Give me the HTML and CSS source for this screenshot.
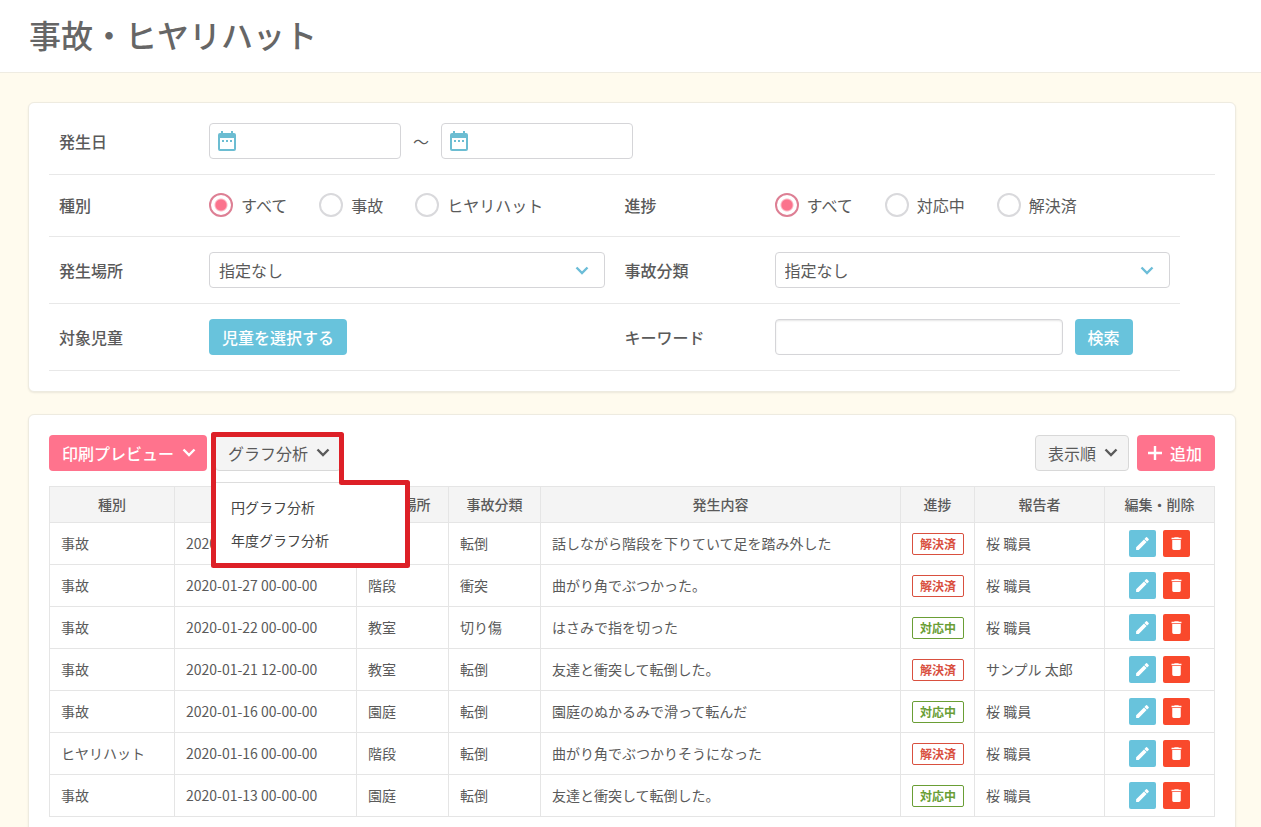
FILE: index.html
```html
<!DOCTYPE html>
<html lang="ja">
<head>
<meta charset="utf-8">
<title>事故・ヒヤリハット</title>
<link rel="stylesheet" href="styles.css">
</head>
<body>
<svg class="defs" aria-hidden="true">
  <symbol id="chevron" viewBox="0 0 14 10"><path d="M1.500 1.500l5.500 5.500 5.500-5.500" fill="none" stroke="currentColor" stroke-width="2.400"/></symbol>
  <symbol id="plus" viewBox="0 0 16 16"><path d="M8 1v14M1 8h14" fill="none" stroke="currentColor" stroke-width="2.400"/></symbol>
  <symbol id="calendar" viewBox="0 0 18 20"><path d="M3 0h2v2h8V0h2v2h1a2 2 0 0 1 2 2v14a2 2 0 0 1-2 2H2a2 2 0 0 1-2-2V4a2 2 0 0 1 2-2h1zM2 7v11h14V7zM4 9h2v2H4zm4 0h2v2H8zm4 0h2v2h-2z" fill="currentColor" fill-rule="evenodd"/></symbol>
  <symbol id="pencil" viewBox="0 0 24 24"><path d="M3 17.300V21h3.700L17.800 9.900l-3.700-3.700zM20.700 7a1 1 0 0 0 0-1.400l-2.300-2.300a1 1 0 0 0-1.400 0l-2.300 2.200 3.800 3.800z" fill="currentColor"/></symbol>
  <symbol id="trash" viewBox="0 0 24 24"><path d="M6 19a2 2 0 0 0 2 2h8a2 2 0 0 0 2-2V7H6zM19 4h-3.500l-1-1h-5l-1 1H5v2h14z" fill="currentColor"/></symbol>
</svg>

<header class="page-header"><h1>事故・ヒヤリハット</h1></header>

<main class="main">
  <form class="card filters">
    <div class="row row-wide">
      <div class="field">
        <label class="name" for="from">発生日</label>
        <div class="control dates">
          <span class="date"><input id="from" class="box" type="text"><svg class="cal"><use href="#calendar"/></svg></span>
          <span>～</span>
          <span class="date"><input class="box" type="text" aria-label="発生日 終了"><svg class="cal"><use href="#calendar"/></svg></span>
        </div>
      </div>
    </div>
    <div class="row row-radios">
      <div class="field" role="radiogroup" aria-labelledby="kind">
        <span class="name" id="kind">種別</span>
        <div class="control radios">
          <label><input type="radio" name="kind" checked>すべて</label>
          <label><input type="radio" name="kind">事故</label>
          <label><input type="radio" name="kind">ヒヤリハット</label>
        </div>
      </div>
      <div class="field" role="radiogroup" aria-labelledby="progress">
        <span class="name" id="progress">進捗</span>
        <div class="control radios">
          <label><input type="radio" name="progress" checked>すべて</label>
          <label><input type="radio" name="progress">対応中</label>
          <label><input type="radio" name="progress">解決済</label>
        </div>
      </div>
    </div>
    <div class="row">
      <div class="field">
        <label class="name" for="place">発生場所</label>
        <div class="control select"><select id="place" class="box"><option>指定なし</option></select><svg class="chevron"><use href="#chevron"/></svg></div>
      </div>
      <div class="field">
        <label class="name" for="category">事故分類</label>
        <div class="control select"><select id="category" class="box"><option>指定なし</option></select><svg class="chevron"><use href="#chevron"/></svg></div>
      </div>
    </div>
    <div class="row">
      <div class="field">
        <span class="name">対象児童</span>
        <div class="control"><button class="btn blue" type="button">児童を選択する</button></div>
      </div>
      <div class="field">
        <label class="name" for="keyword">キーワード</label>
        <div class="control search"><input id="keyword" class="box inset" type="text"><button class="btn blue" type="button">検索</button></div>
      </div>
    </div>
  </form>

  <section class="card">
    <div class="toolbar">
      <button class="btn pink" type="button">印刷プレビュー<svg class="chevron"><use href="#chevron"/></svg></button>
      <div class="dropdown">
        <button class="btn gray" type="button" aria-expanded="true">グラフ分析<svg class="chevron"><use href="#chevron"/></svg></button>
        <div class="menu">
          <a href="#">円グラフ分析</a>
          <a href="#">年度グラフ分析</a>
        </div>
        <svg class="outline" viewBox="0 0 199 136" aria-hidden="true"><path d="M2.500 2.500H130.500V50.500H196.500V133.500H2.500z" fill="none" stroke="#dd2027" stroke-width="5" stroke-linejoin="round"/></svg>
      </div>
      <button class="btn gray push" type="button">表示順<svg class="chevron"><use href="#chevron"/></svg></button>
      <button class="btn pink add" type="button"><svg class="plus"><use href="#plus"/></svg>追加</button>
    </div>
    <table class="list">
      <colgroup><col class="c-kind"><col class="c-date"><col class="c-place"><col class="c-place"><col><col class="c-state"><col class="c-staff"><col class="c-edit"></colgroup>
      <thead><tr><th>種別</th><th aria-label="発生日時"></th><th>発生場所</th><th>事故分類</th><th>発生内容</th><th>進捗</th><th>報告者</th><th>編集・削除</th></tr></thead>
      <tbody>
        <tr><td>事故</td><td>2020-01-28 00-00-00</td><td>階段</td><td>転倒</td><td>話しながら階段を下りていて足を踏み外した</td><td><span class="tag done">解決済</span></td><td>桜 職員</td><td><div class="ops"><button class="op edit" type="button" aria-label="編集"><svg><use href="#pencil"/></svg></button><button class="op del" type="button" aria-label="削除"><svg><use href="#trash"/></svg></button></div></td></tr>
        <tr><td>事故</td><td>2020-01-27 00-00-00</td><td>階段</td><td>衝突</td><td>曲がり角でぶつかった。</td><td><span class="tag done">解決済</span></td><td>桜 職員</td><td><div class="ops"><button class="op edit" type="button" aria-label="編集"><svg><use href="#pencil"/></svg></button><button class="op del" type="button" aria-label="削除"><svg><use href="#trash"/></svg></button></div></td></tr>
        <tr><td>事故</td><td>2020-01-22 00-00-00</td><td>教室</td><td>切り傷</td><td>はさみで指を切った</td><td><span class="tag open">対応中</span></td><td>桜 職員</td><td><div class="ops"><button class="op edit" type="button" aria-label="編集"><svg><use href="#pencil"/></svg></button><button class="op del" type="button" aria-label="削除"><svg><use href="#trash"/></svg></button></div></td></tr>
        <tr><td>事故</td><td>2020-01-21 12-00-00</td><td>教室</td><td>転倒</td><td>友達と衝突して転倒した。</td><td><span class="tag done">解決済</span></td><td>サンプル 太郎</td><td><div class="ops"><button class="op edit" type="button" aria-label="編集"><svg><use href="#pencil"/></svg></button><button class="op del" type="button" aria-label="削除"><svg><use href="#trash"/></svg></button></div></td></tr>
        <tr><td>事故</td><td>2020-01-16 00-00-00</td><td>園庭</td><td>転倒</td><td>園庭のぬかるみで滑って転んだ</td><td><span class="tag open">対応中</span></td><td>桜 職員</td><td><div class="ops"><button class="op edit" type="button" aria-label="編集"><svg><use href="#pencil"/></svg></button><button class="op del" type="button" aria-label="削除"><svg><use href="#trash"/></svg></button></div></td></tr>
        <tr><td>ヒヤリハット</td><td>2020-01-16 00-00-00</td><td>階段</td><td>転倒</td><td>曲がり角でぶつかりそうになった</td><td><span class="tag done">解決済</span></td><td>桜 職員</td><td><div class="ops"><button class="op edit" type="button" aria-label="編集"><svg><use href="#pencil"/></svg></button><button class="op del" type="button" aria-label="削除"><svg><use href="#trash"/></svg></button></div></td></tr>
        <tr><td>事故</td><td>2020-01-13 00-00-00</td><td>園庭</td><td>転倒</td><td>友達と衝突して転倒した。</td><td><span class="tag open">対応中</span></td><td>桜 職員</td><td><div class="ops"><button class="op edit" type="button" aria-label="編集"><svg><use href="#pencil"/></svg></button><button class="op del" type="button" aria-label="削除"><svg><use href="#trash"/></svg></button></div></td></tr>
      </tbody>
    </table>
  </section>
</main>
</body>
</html>
```
FILE: styles.css
```css
* { box-sizing: border-box; }
body {
  margin: 0;
  background: #fffbee;
  color: #5a5a5a;
  font: 16px/24px "Noto Sans CJK JP", "Noto Sans", sans-serif;
}
button, input, select { font: inherit; color: inherit; margin: 0; }
svg { display: block; flex: none; }
.defs { position: absolute; width: 0; height: 0; }

.page-header {
  background: #fff;
  border-bottom: 1px solid #efece2;
  padding: 10px 29px 14px;
}
.page-header h1 {
  margin: 0;
  font-size: 32px;
  line-height: 48px;
  font-weight: 500;
  color: #666;
}

.main { padding: 29px 25px 23px 28px; display: grid; gap: 22px; }
.card {
  background: #fff;
  border: 1px solid #eeebe0;
  border-radius: 6px;
  box-shadow: 0 1px 2px rgba(0, 0, 0, .08);
  padding: 20px;
  min-width: 0;
}

/* filters */
.row {
  display: flex;
  align-items: center;
  width: 97%;
  min-height: 62px;
  padding: 15px 0;
  border-bottom: 1px solid #e8e8e8;
}
.row-wide { width: 100%; padding-top: 0; min-height: 0; }
.row-radios { padding-bottom: 17px; }
.field { flex: 1; display: flex; align-items: center; padding: 0 10px; min-width: 0; }
.name { width: 150px; flex: none; font-weight: 500; }
.control { flex: 1; min-width: 0; }
.box {
  display: block;
  width: 100%;
  height: 36px;
  padding: 0 9px;
  border: 1px solid #d5d5d8;
  border-radius: 4px;
  background: #fff;
  appearance: none;
}
.inset { box-shadow: inset 0 1px 2px rgba(0, 0, 0, .1); }
.dates { display: flex; align-items: center; gap: 12px; }
.date { position: relative; width: 192px; }
.date .box { padding-left: 34px; }
.cal { position: absolute; left: 9px; top: 8px; width: 18px; height: 20px; color: #6cbdd2; pointer-events: none; }
.radios { display: flex; gap: 32px; }
.radios label { display: flex; align-items: center; gap: 8px; }
.radios input {
  appearance: none;
  width: 24px;
  height: 24px;
  border: 2px solid #d9d9dc;
  border-radius: 50%;
  background: #fff;
}
.radios input:checked {
  border-color: #dd7f94;
  background: radial-gradient(circle, #fb738d 5px, #fff 7px);
}
.select { position: relative; }
.chevron { width: 14px; height: 10px; }
.select .chevron { position: absolute; right: 16px; top: 14px; color: #6cbdd8; pointer-events: none; }
.search { display: flex; gap: 12px; }
.search .box { width: 288px; }

.btn {
  display: inline-flex;
  align-items: center;
  gap: 8px;
  height: 36px;
  padding: 0 12px;
  border: 1px solid transparent;
  border-radius: 4px;
  white-space: nowrap;
}
.control > .btn { flex: none; }
.blue { background: #68c3dc; color: #fff; font-weight: 500; }
.pink { background: #ff738d; color: #fff; font-weight: 500; }
.gray { background: #f4f4f4; border-color: #d8d8d8; }
.btn .chevron { margin-right: -2px; }

/* toolbar */
.toolbar { display: flex; gap: 8px; margin-bottom: 15px; }
.dropdown { position: relative; }
.push { margin-left: auto; }
.add { padding-left: 9px; gap: 7px; }
.plus { width: 16px; height: 16px; }
.menu {
  position: absolute;
  left: 0;
  top: 47px;
  width: 192px;
  padding: 8px 0;
  background: #fff;
  border-top: 1px solid #ddd;
  z-index: 1;
}
.menu a {
  display: block;
  padding: 0 16px;
  font-size: 14px;
  line-height: 33px;
  color: #444;
  text-decoration: none;
}
.outline { position: absolute; left: -4px; top: -3px; width: 199px; height: 136px; z-index: 2; pointer-events: none; }

/* list */
.list {
  width: 100%;
  table-layout: fixed;
  border-collapse: collapse;
  font-size: 14px;
  line-height: 20px;
}
.c-kind { width: 125px; }
.c-date { width: 182px; }
.c-place { width: 92px; }
.c-state { width: 74px; }
.c-staff { width: 130px; }
.c-edit { width: 110px; }
.list th, .list td { border: 1px solid #e5e5e5; padding: 0 11px 2px; white-space: nowrap; }
.list th { height: 36px; background: #f4f4f4; font-weight: 500; }
.list td { height: 42px; }
.list td:has(.tag), .list td:has(.ops) { padding-bottom: 0; }
.tag {
  display: block;
  width: 52px;
  height: 22px;
  border: 1px solid;
  border-radius: 2px;
  font-size: 12px;
  line-height: 20px;
  font-weight: 700;
  text-align: center;
}
.done { color: #d9503f; }
.open { color: #6a9e35; }
.ops { display: flex; justify-content: center; gap: 7px; }
.op {
  display: grid;
  place-items: center;
  width: 27px;
  height: 27px;
  padding: 0;
  border: 0;
  border-radius: 2px;
  color: #fff;
}
.op svg { width: 17px; height: 17px; }
.edit { background: #68c3dc; }
.del { background: #f9492c; }
```
